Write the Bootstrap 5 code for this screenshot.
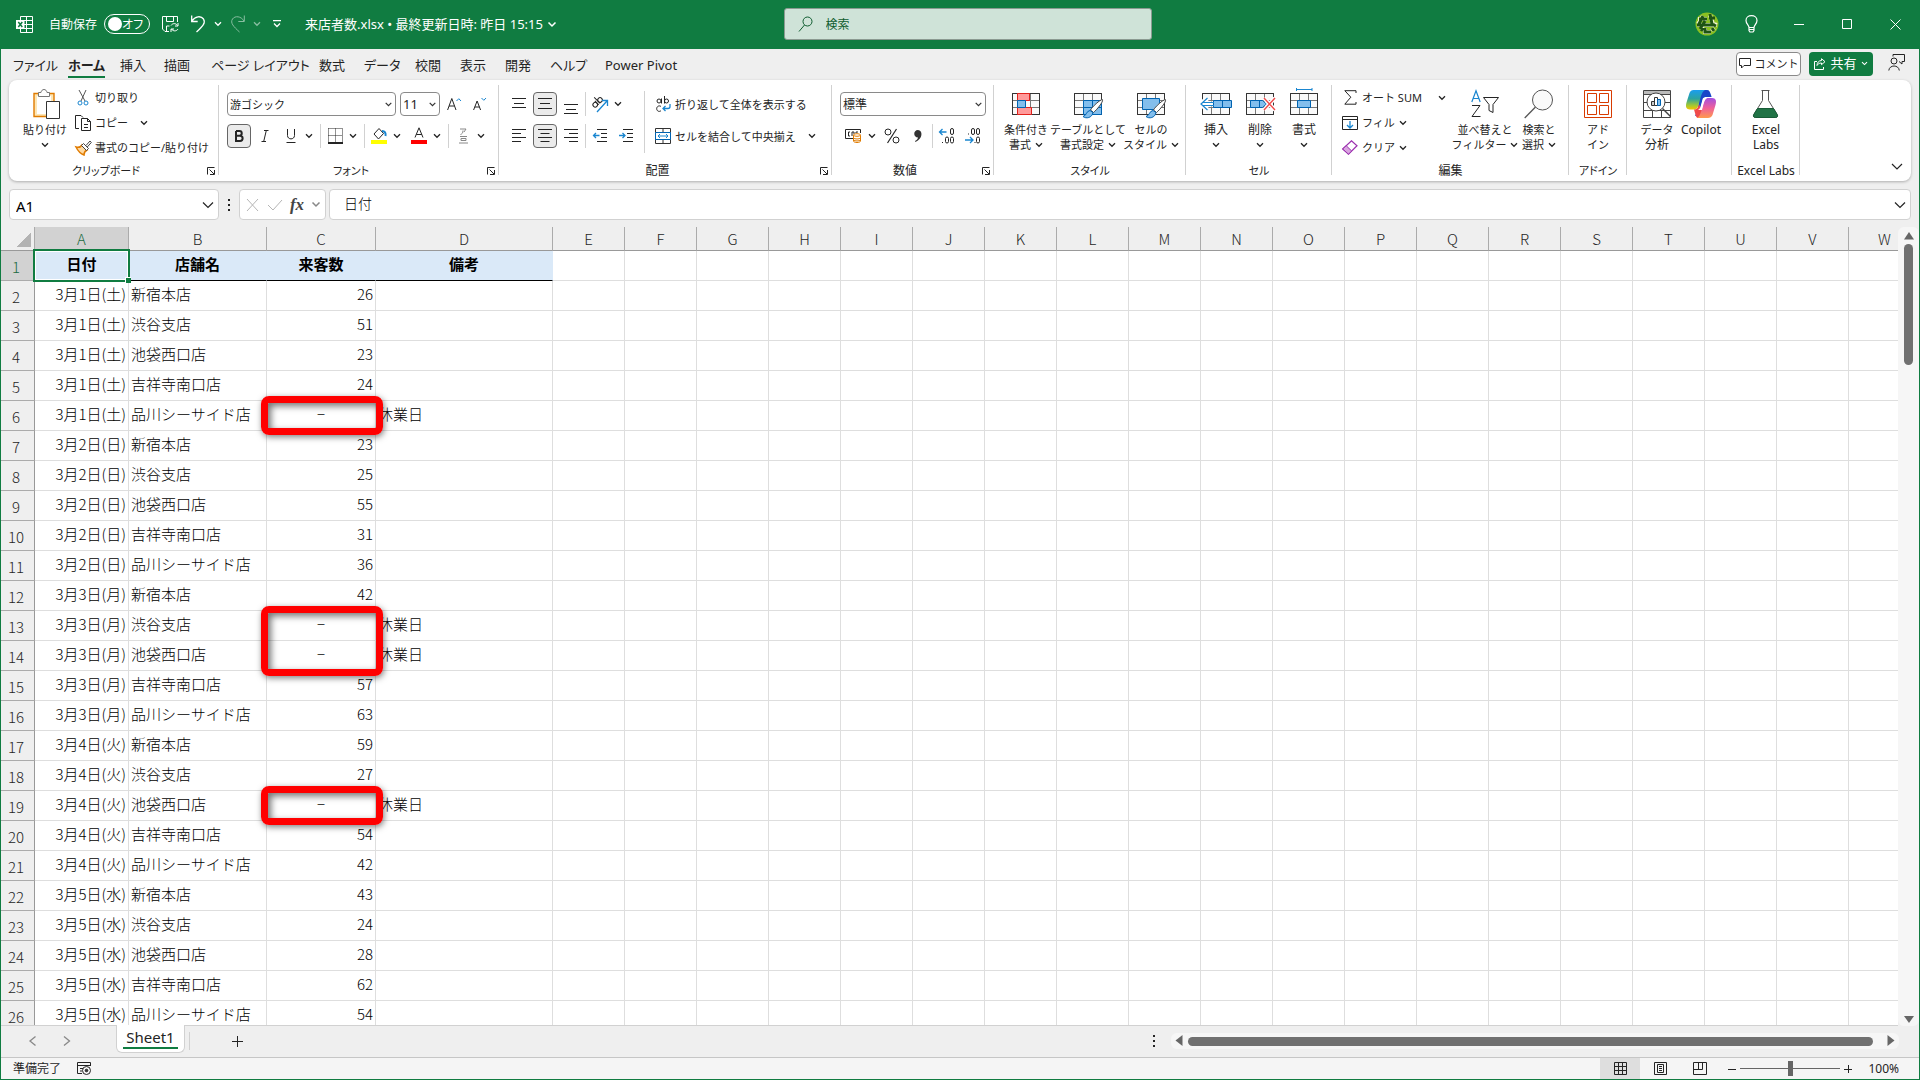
<!DOCTYPE html>
<html lang="ja">
<head>
<meta charset="utf-8">
<meta name="viewport" content="width=device-width, initial-scale=1">
<title>来店者数.xlsx - Excel</title>
<link href="https://cdn.jsdelivr.net/npm/bootstrap@5.3.0/dist/css/bootstrap.min.css" rel="stylesheet">
<style>
:root{--xl:#107c41;--chrome:#efefef;--line:#d1d1d1;--grid:#dedede;--ink:#242424}
body{font-family:"Noto Sans","Noto Sans CJK JP",sans-serif;font-size:12px;line-height:15px;color:var(--ink);font-feature-settings:"palt"}
button{background:none;border:0;padding:0;color:inherit;white-space:nowrap}
svg{display:block;flex:none;fill:none;stroke:currentColor;overflow:visible}
.kana{font-size:11px}
.pale{color:#b5b5b5}
.dim{color:#888}
.app{background:var(--chrome);border:solid var(--xl);border-width:0 1px 1px;overflow:hidden}
.titlebar{height:49px;background:var(--xl);color:#fff}
.docname{font-size:13px}
.pill{width:46px;height:20px;border:1px solid #fff;border-radius:10px;padding:0 8px 0 3px;margin-left:7px;white-space:nowrap}
.knob{width:14px;height:14px;border-radius:50%;background:#fff;flex:none}
.side{flex:1 1 0}
.quick{padding-left:15px}
.gap-l{margin-left:12px}
.finder{width:368px;height:32px;background:#cfe3d8;border:1px solid #8b9a91;border-radius:3px;color:#0e5c2f;padding-left:13px}
.finder input{border:0;background:none;outline:0;color:#0e5c2f;margin-left:11px;width:300px}
.finder input::placeholder{color:#0e5c2f;opacity:1}
.win{width:48px;height:40px}
.tabs{height:32px;font-size:13px;padding:0 14px 0 12px}
.tabgrid{display:grid;grid-template-columns:55px 52px 44px 47px 108px 45px 51px 45px 45px 45px 55px 80px}
.tabgrid a{color:var(--ink);text-decoration:none;line-height:33px;height:29px;white-space:nowrap;justify-self:start}
.tabgrid a.on{font-weight:700;border-bottom:2px solid var(--xl)}
.tool{height:24px;border-radius:4px;font-size:13px;margin-top:3px}
.tool-c{width:65px;background:#fff;border:1px solid #8a8a8a;font-size:11px;margin-right:8px}
.tool-s{width:64px;background:var(--xl);color:#fff;margin-right:15px}
.ribbon{background:#fff;border-radius:8px;margin:0 8px;height:101px;padding-top:5px;box-shadow:0 1px 3px rgba(0,0,0,.28)}
.grp{background:linear-gradient(var(--line),var(--line)) right top/1px 90px no-repeat}
.grp-body{height:76px}
.cap{height:20px;line-height:20px}
.cap button{width:16px}
.cap button svg{margin:0 auto}
.g1{width:210px}.g2{width:280px}.g3{width:333px}.g4{width:162px}.g5{width:192px}.g6{width:146px}.g7{width:237px}.g8{width:58px}.g9{width:105px}.g10{width:68px}
.big{display:flex;flex-direction:column;align-items:center;height:76px}
.big .pic{height:37px;display:flex;align-items:center}
.big .ln{height:15px;display:flex;align-items:center;gap:4px}
.w44{width:44px}.w56{width:56px}.w64{width:64px}.w60{width:60px}.w66{width:66px}.w52{width:52px}
.sm{display:flex;align-items:center;height:25px}
.sm .pic{width:20px;margin-right:2px;display:flex;justify-content:center}
.tworow{padding-top:7px;display:flex;flex-direction:column;gap:8px}
.tworow .sm{height:24px}
.ib{width:24px;height:24px;display:flex;align-items:center;justify-content:center}
.ib.on{border:1px solid #666;border-radius:4px;background:#ebebeb}
.near{margin-left:2px}
.cv{width:12px;height:24px;display:flex;align-items:center;justify-content:center}
.sep{width:1px;height:24px;background:var(--line);margin:0 2px 0 5px}
.sep.even{margin:0 2px}
.sep.tall{height:62px;margin:6px 0 0 6px}
.pick{appearance:none;height:24px;border:1px solid #8a8a8a;border-radius:4px;padding:0 2px;color:var(--ink);background:#fff url("data:image/svg+xml,%3Csvg xmlns='http://www.w3.org/2000/svg' width='7' height='5'%3E%3Cpath d='M.7.8 3.5 3.6 6.3.8' fill='none' stroke='%23333' stroke-width='1.2'/%3E%3C/svg%3E") right 3px center no-repeat}
.pick.f{width:169px}.pick.s{width:40px;font-size:13px}.pick.n{width:146px;margin-left:8px}
.money{padding-left:10px}
.fbar{margin:8px 8px 7px;height:31px}
.fbox{background:#fff;border:1px solid var(--line);border-radius:4px;height:31px}
.fbox input{border:0;outline:0;background:none;min-width:0}
.namebox{width:210px;padding:0 4px}
.namebox input{font-size:15px;padding-top:3px}
.fxbox{width:87px;margin-right:3px}
.fxl{font:italic 700 17px "Liberation Serif",serif;color:#444}
.fx-in{font-size:14px;font-family:"Noto Sans CJK JP",sans-serif;font-weight:300;padding:0 0 2px 14px;font-feature-settings:normal}
.gridwrap{min-height:0}
.sheet{background:#fff;overflow:hidden;border-bottom:1px solid var(--line)}
.cells{border-collapse:separate;border-spacing:0;table-layout:fixed;width:1919px;font-family:"Noto Sans CJK JP",sans-serif;font-size:15px;line-height:22px;font-weight:300;color:#000;font-feature-settings:normal}
.cells th,.cells td{padding:0 2px;white-space:nowrap;height:30px;border:solid var(--grid);border-width:0 1px 1px 0}
.cells td{padding-bottom:4px}
.cells th{background:var(--chrome);font-weight:300;text-align:center;color:#262626}
.cells thead th{height:24px;border-color:#ababab;border-bottom-color:#999}
.cells tbody th{border-color:#999;border-bottom-color:#ababab;padding:2px 3px 0 0}
.cells th.sel{background:#d2d2d2;color:#1b6b41}
.cells td.hd{background:#dae9f8;font-weight:700;text-align:center;border-color:#dae9f8;border-bottom-color:#000}
.cells .r{text-align:right}
.cells .c{text-align:center;position:relative}
.corner{padding:0!important;background:linear-gradient(135deg,transparent 50%,#b3b3b3 50%) right 3px bottom 3px/15px 15px no-repeat var(--chrome)!important}
.cells .cur{position:relative}
.cur::before{content:"";position:absolute;inset:-2px -2px -2px -2px;border:2px solid #107c41;box-shadow:inset 0 0 0 1px #fff;z-index:2}
.cur::after{content:"";position:absolute;right:-3px;bottom:-3px;width:6px;height:6px;background:#107c41;border:solid #fff;border-width:1px 0 0 1px;z-index:3}
.flag{position:absolute;inset:-5px -8px -5px -6px;border:7px solid #f00;border-radius:8px;z-index:4;box-shadow:1px 2px 6px rgba(0,0,0,.5),inset 3px 3px 7px rgba(0,0,0,.55)}
.flag.two{bottom:-36px}
.vbar{width:21px}
.vthumb{width:9px;height:121px;border-radius:5px;background:#707070;margin-top:1px}
.hbar{height:16px;background:#f6f6f6;border-radius:6px;width:728px;margin-right:20px}
.hthumb{height:9px;border-radius:5px;background:#707070;margin:0 14px 0 5px}
.track{background:#f6f6f6;border-radius:6px}
.bottom{height:32px;border-bottom:1px solid #c6c6c6;padding-bottom:1px}
.pager{width:115px;padding-left:25px;gap:16px}
.sheet-tab{width:69px;height:28px;margin-top:-1px;background:#fff;border:1px solid var(--line);border-top:0;border-radius:0 0 6px 6px;font-size:15px}
.sheet-tab span{border-bottom:2px solid var(--xl);padding:0 3px;height:24px;line-height:25px}
.tab-end{width:1px;height:18px;background:var(--line);margin:0 42px 0 4px}
.status{height:21px;background:#f5f5f5}
.view{width:40px;height:21px;display:flex;align-items:center;justify-content:center}
.view.on{background:#dedede}
.zoomer{appearance:none;width:100px;height:16px;background:linear-gradient(#666,#666) center/100% 1px no-repeat;margin:0}
.zoomer::-webkit-slider-thumb{appearance:none;width:5px;height:15px;background:#666}
</style>
<script src="https://cdn.jsdelivr.net/npm/bootstrap@5.3.0/dist/js/bootstrap.bundle.min.js"></script>
</head>
<body>
<svg class="d-none" xmlns="http://www.w3.org/2000/svg">
<symbol id="cv" viewBox="0 0 8 6"><path d="M1 1.3 4 4.3 7 1.3" stroke-width="1.3"/></symbol>
<symbol id="lch" viewBox="0 0 8 8"><path d="M.5 7.500V.5h7M2.500 2.500l4.500 4.500M7.500 3v4.500H3"/></symbol>
<symbol id="tbl" viewBox="0 0 28 22"><path d="M.5.5h27v21H.5z" fill="#fafafa"/><path d="M.5 7.500h27M.5 14.500h27M9.500.5v21M18.500.5v21" stroke="#777"/><path d="M.5.5h27v21H.5z" stroke="#333"/></symbol>
<symbol id="brush" viewBox="0 0 22 20"><path d="M20.500.6C18 .5 10 8 8.500 11l3 2.500C14.500 11 21.500 3 20.500.6z" fill="#fff" stroke="#444"/><path d="M8 11.500c-4 .5-3 5-7 6 3 2.500 9 1.500 10-4z" fill="#83beec" stroke="#0063b1"/></symbol>
</svg>
<div class="app d-flex flex-column vh-100">

<header class="titlebar d-flex align-items-center">
 <div class="side quick d-flex align-items-center">
  <svg width="17" height="17" viewBox="0 0 17 17"><path d="M4.500 4V.5h12v16h-12V13M10.500.5v16M4.500 4.500h12M8 8.500h8.500M4.500 12.500h12"/><path d="M0 4h8.500v9H0z" fill="#fff" stroke="none"/><path d="m2.300 6 4 5M6.300 6l-4 5" stroke="#107c41" stroke-width="1.500"/></svg>
  <label class="d-flex align-items-center ms-3">自動保存<input type="checkbox" class="visually-hidden"><span class="pill d-flex align-items-center justify-content-between"><span class="knob"></span>オフ</span></label>
  <button class="gap-l" aria-label="保存"><svg width="17" height="17" viewBox="0 0 17 17"><path d="M7 15.500H3L.5 13V.5h15V6M4.500.5v5h7v-5M4.500 15v-5h3M9 9.500c1.500-2.500 5-2.500 6.500 0M16 7v3h-3M16 13c-1.500 2.500-5 2.500-6.500 0M9 16v-3h3"/></svg></button>
  <button class="gap-l d-flex align-items-center gap-2" aria-label="元に戻す"><svg width="15" height="18" viewBox="0 0 15 18"><path d="M.7.5v6h6M1 6C4 1 10 .5 12.500 4c2.500 4-1 7.500-7 13" stroke-width="1.300"/></svg><svg width="8" height="6"><use href="#cv"/></svg></button>
  <button class="ms-2 d-flex align-items-center gap-2 opacity-50" aria-label="やり直し"><svg width="15" height="18" viewBox="0 0 15 18"><path d="M14.300.5v6h-6M14 6C11 1 5 .5 2.500 4c-2.500 4 1 7.500 7 13"/></svg><svg width="8" height="6"><use href="#cv"/></svg></button>
  <button class="gap-l" aria-label="カスタマイズ"><svg width="8" height="8" viewBox="0 0 8 8"><path d="M0 .7h8M1 3.500 4 6.500 7 3.500" stroke-width="1.300"/></svg></button>
  <button class="docname ms-4 d-flex align-items-center gap-1">来店者数.xlsx • 最終更新日時: 昨日 15:15 <svg width="10" height="7" viewBox="0 0 8 6"><use href="#cv"/></svg></button>
 </div>
 <label class="finder d-flex align-items-center"><svg width="15" height="17" viewBox="0 0 15 17"><circle cx="9.500" cy="5.500" r="4.500"/><path d="M6.500 9 1 15.500"/></svg><input type="search" placeholder="検索" aria-label="検索"></label>
 <div class="side d-flex align-items-center justify-content-end">
  <button class="me-2" aria-label="アカウント"><svg width="24" height="24" viewBox="0 0 24 24"><circle cx="12" cy="12" r="11.500" fill="#8bc021" stroke="none"/><g stroke="#eef3cf" stroke-width="4"><path d="M3 7h9M2 13h17M8 4l-5 8M10 11l-4 6M15 3l3 9 4 1M6 18l2-2M10 16v4h6M17 16l2 3"/></g><g stroke="#1e5414" stroke-width="3"><path d="M4 7h8M2 13h18M8 4 4 12M10 9l-5 8M15 2l2 10 4 2M14 6h6M6 19l2-3M10 16v4h6M17 16l2 3"/></g></svg></button>
  <button class="win d-flex align-items-center justify-content-center" aria-label="ヒント"><svg width="13" height="18" viewBox="0 0 13 18"><path d="M4 12.500C4 10 1 9 1 5.500 1 2.500 3.500.7 6.500.7S12 2.500 12 5.500C12 9 9 10 9 12.500zM4 12.500v3l1 1.500h3l1-1.500v-3M4 14.500h5" stroke-width="1.200"/></svg></button>
  <button class="win d-flex align-items-center justify-content-center" aria-label="最小化"><svg width="10" height="10"><path d="M0 5.500h10"/></svg></button>
  <button class="win d-flex align-items-center justify-content-center" aria-label="最大化"><svg width="10" height="10"><path d="M.5.5h9v9h-9z"/></svg></button>
  <button class="win d-flex align-items-center justify-content-center" aria-label="閉じる"><svg width="11" height="11"><path d="m.5.5 10 10M10.500.5l-10 10"/></svg></button>
 </div>
</header>

<nav class="tabs d-flex justify-content-between align-items-start">
 <div class="tabgrid"><a href="#">ファイル</a><a href="#" class="on">ホーム</a><a href="#">挿入</a><a href="#">描画</a><a href="#">ページ レイアウト</a><a href="#">数式</a><a href="#">データ</a><a href="#">校閲</a><a href="#">表示</a><a href="#">開発</a><a href="#">ヘルプ</a><a href="#">Power Pivot</a></div>
 <div class="d-flex align-items-center">
  <button class="tool tool-c d-flex align-items-center justify-content-center gap-1"><svg width="12" height="11" viewBox="0 0 12 11"><path d="M.5.5h11v7H5L2.500 10V7.500h-2z"/></svg>コメント</button>
  <button class="tool tool-s d-flex align-items-center justify-content-center gap-1"><svg width="12" height="12" viewBox="0 0 12 12"><path d="M3 3.500H.5v8h9V9M7.500.7l3.500 3-3.500 3V5C5 5 4 6 3 7.500c0-3 2-5 4.500-5z"/></svg>共有<svg width="7" height="5"><use href="#cv"/></svg></button>
  <button aria-label="共同作業"><svg width="17" height="17" viewBox="0 0 17 17"><circle cx="6" cy="7" r="3"/><path d="M.8 16.500c.5-6 10-6 10.500 0M5 2.500v-2h11.500v7H14v2.500l-3-2.500"/></svg></button>
 </div>
</nav>

<section class="ribbon d-flex">
 <div class="grp g1 kana"><div class="grp-body d-flex ps-2">
  <button class="big w56"><span class="pic"><svg width="32" height="30" viewBox="-4 0 32 30"><path d="M1 4.500h20v23H1z" fill="#fde6b5" stroke="#e07b00" stroke-width="1.400"/><path d="M4 7h14v18H4z" fill="#fff" stroke="none"/><path d="M5.500 7.500v-4H8c.5-4 5.500-4 6 0h2.500v4z" fill="#fff" stroke="#777"/><path d="M13.500 12.500h13v17h-13z" fill="#fff" stroke="#333"/></svg></span><span class="ln">貼り付け</span><span class="ln"><svg width="8" height="6"><use href="#cv"/></svg></span></button>
  <div><button class="sm"><span class="pic"><svg width="12" height="16" viewBox="0 0 12 16"><path d="M2 0l6 11M9 0 4 11" stroke="#555"/><circle cx="3" cy="13" r="2" stroke="#1a86d0"/><circle cx="9" cy="13" r="2" stroke="#1a86d0"/></svg></span>切り取り</button>
  <button class="sm"><span class="pic"><svg width="16" height="16" viewBox="0 0 16 16"><path d="M4 13.500H.5V.5H6l2 2M6.500 3.500h6l3 3v9h-9zM12.500 3.500v3h3M9 9.500h4M9 12.500h4"/></svg></span>コピー<span class="gap-l"><svg width="8" height="6"><use href="#cv"/></svg></span></button>
  <button class="sm"><span class="pic"><svg width="17" height="16" viewBox="0 0 17 16"><path d="M1 7c3 1 5-.5 6-2l5 5c-2 1-3 3-3 5-3-1-6-4-8-8z" fill="#ffd9a0" stroke="#e07b00" stroke-width="1.500"/><path d="m6.500 5.500 2-2 5 5-2 2zM11 5.500 15 1l1.300 1.500-4 4.500" fill="#fff" stroke="#444"/></svg></span>書式のコピー/貼り付け</button></div>
 </div><div class="cap d-flex"><span class="flex-fill text-center">クリップボード</span><button aria-label="詳細"><svg width="8" height="8"><use href="#lch"/></svg></button></div></div>

 <div class="grp g2"><div class="grp-body tworow ps-2">
  <div class="d-flex"><select class="pick f kana" aria-label="フォント"><option>游ゴシック</option></select><select class="pick s ms-1" aria-label="サイズ"><option>11</option></select>
   <button class="ib near" aria-label="拡大"><svg width="15" height="14" viewBox="0 0 15 14"><path d="M.6 13 4.800 1.500 9 13M2 9h5.500"/><path d="m9.500 4 2.300-2.300L14 4" stroke="#1a86d0"/></svg></button><button class="ib near" aria-label="縮小"><svg width="14" height="14" viewBox="0 0 14 14"><path d="m.6 13 3.500-9 3.500 9M1.800 10h4.700"/><path d="m8.500 1 2.300 2.300L13 1" stroke="#1a86d0"/></svg></button></div>
  <div class="d-flex"><button class="ib on" aria-label="太字"><svg width="10" height="12" viewBox="0 0 10 12"><path d="M2 1h3.500c3 0 3 4.700 0 4.700H2M2 5.700h4c3.500 0 3.500 5.300 0 5.300H2zV1" stroke-width="2"/></svg></button><button class="ib near" aria-label="斜体"><svg width="8" height="12"><path d="M3 .5h4.500M.5 11.500H5M5.300.5 2.700 11.500"/></svg></button><button class="ib near" aria-label="下線"><svg width="10" height="14"><path d="M1.500 0v6.500c0 4.500 7 4.500 7 0V0M.5 13.500h9"/></svg></button><button class="cv" aria-label="下線の種類"><svg width="8" height="6"><use href="#cv"/></svg></button><span class="sep"></span>
   <button class="ib" aria-label="罫線"><svg width="15" height="16"><path d="M.5.5h14M.5 7.500h14M.5.5v14M7.500.5v14M14.500.5v14" stroke-dasharray="1 1"/><path d="M0 15h15" stroke-width="2"/></svg></button><button class="cv" aria-label="罫線の種類"><svg width="8" height="6"><use href="#cv"/></svg></button><span class="sep"></span>
   <button class="ib" aria-label="塗りつぶし"><svg width="17" height="18"><path d="m3 7 5-5.500 4.500 5L7.500 12z"/><path d="M11 4c3 0 4 2 3.500 5" stroke="#1a86d0" stroke-width="2"/><path d="M0 13h16v4H0z" fill="#ff0" stroke="none"/></svg></button><button class="cv" aria-label="色"><svg width="8" height="6"><use href="#cv"/></svg></button>
   <button class="ib ms-1" aria-label="文字色"><svg width="16" height="18"><path d="M4 10.500 8 .8l4 9.700M5.300 7.500h5.500"/><path d="M0 13h16v4H0z" fill="red" stroke="none"/></svg></button><button class="cv" aria-label="文字の色"><svg width="8" height="6"><use href="#cv"/></svg></button><span class="sep"></span>
   <button class="ib dim" aria-label="ふりがな"><svg width="9" height="16"><path d="M1 1h6L5 4M4 2.500C4 5 3 6 1.500 6.500M1 8.500h7M2 10.500h5v2H2zM0 15h9"/></svg></button><button class="cv" aria-label="ふりがな設定"><svg width="8" height="6"><use href="#cv"/></svg></button></div>
 </div><div class="cap d-flex kana"><span class="flex-fill text-center">フォント</span><button aria-label="詳細"><svg width="8" height="8"><use href="#lch"/></svg></button></div></div>

 <div class="grp g3"><div class="grp-body d-flex ps-2">
  <div class="tworow">
   <div class="d-flex"><button class="ib" aria-label="上揃え"><svg width="14" height="20"><path d="M0 4.500h14M2 9.500h10M0 13.500h14"/></svg></button><button class="ib on near" aria-label="上下中央"><svg width="14" height="12"><path d="M0 .5h14M2 5.500h10M0 10.500h14"/></svg></button><button class="ib near" aria-label="下揃え"><svg width="14" height="20"><path d="M0 10.500h14M2 15.500h10M0 19.500h14"/></svg></button><span class="sep even"></span><button class="ib" aria-label="方向"><svg width="18" height="18"><g transform="rotate(-45 6 8)"><circle cx="3.500" cy="8" r="2.300"/><path d="M6 5v5.500M8 2v8.500"/><circle cx="10.300" cy="8" r="2.300"/></g><path d="M6 17 16 6M11 5.500h5.500V11" stroke="#1a86d0" stroke-width="1.300"/></svg></button><button class="cv" aria-label="方向の種類"><svg width="8" height="6"><use href="#cv"/></svg></button></div>
   <div class="d-flex"><button class="ib" aria-label="左揃え"><svg width="14" height="14"><path d="M0 .5h14M0 4.500h9M0 8.500h14M0 12.500h9"/></svg></button><button class="ib on near" aria-label="中央揃え"><svg width="14" height="14"><path d="M0 .5h14M2.500 4.500h9M0 8.500h14M2.500 12.500h9"/></svg></button><button class="ib near" aria-label="右揃え"><svg width="14" height="14"><path d="M0 .5h14M5 4.500h9M0 8.500h14M5 12.500h9"/></svg></button><span class="sep even"></span><button class="ib" aria-label="インデントを減らす"><svg width="14" height="14"><path d="M4 .5h10M8 4.500h6M8 8.500h6M4 12.500h10"/><path d="M.5 6.500h6M3 4 .5 6.500 3 9" stroke="#1a86d0" stroke-width="1.300"/></svg></button><button class="ib near" aria-label="インデントを増やす"><svg width="14" height="14"><path d="M4 .5h10M8 4.500h6M8 8.500h6M4 12.500h10"/><path d="M0 6.500h6M3.500 4 6 6.500 3.500 9" stroke="#1a86d0" stroke-width="1.300"/></svg></button></div>
  </div>
  <span class="sep tall"></span>
  <div class="tworow ps-2 kana"><button class="sm"><span class="pic"><svg width="15" height="16"><circle cx="3" cy="5" r="2"/><path d="M5.500 2.500v5M8.500 0v7.500M5 10.500c-2-1.500-4.300 0-4.300 2.200s2.300 3.600 4.300 2"/><circle cx="10.500" cy="5" r="2"/><path d="M14 8v2.500c0 1.500-1 2-2 2H7M9.500 10 7 12.500 9.500 15" stroke="#1a86d0" stroke-width="1.300"/></svg></span>折り返して全体を表示する</button>
  <button class="sm"><span class="pic"><svg width="16" height="16"><path d="M.5.5h15v15H.5zM8 .5v15" stroke="#333"/><path d="M.5 4.500h15v7H.5z" fill="#fff" stroke="#0063b1"/><path d="M3 8h10M5 6 3 8l2 2M11 6l2 2-2 2" stroke="#1a86d0"/></svg></span>セルを結合して中央揃え<span class="gap-l"><svg width="8" height="6"><use href="#cv"/></svg></span></button></div>
 </div><div class="cap d-flex"><span class="flex-fill text-center">配置</span><button aria-label="詳細"><svg width="8" height="8"><use href="#lch"/></svg></button></div></div>

 <div class="grp g4"><div class="grp-body tworow">
  <div class="d-flex"><select class="pick n" aria-label="表示形式"><option>標準</option></select></div>
  <div class="d-flex money"><button class="ib" aria-label="通貨"><svg width="18" height="14"><path d="M9 9.500H.5V.5h15V4M5 3H3.500v4H5M7 7V3h2v2M11 4V3h2"/><path d="M8.500 6v6c0 2 7 2 7 0V6" fill="#fff" stroke="#e07b00"/><ellipse cx="12" cy="6" rx="3.500" ry="1.300" fill="#fff" stroke="#e07b00"/><path d="M8.500 9c1 1.300 6 1.300 7 0M8.500 11c1 1.300 6 1.300 7 0" stroke="#e07b00"/></svg></button><button class="cv" aria-label="通貨の種類"><svg width="8" height="6"><use href="#cv"/></svg></button><button class="ib near" aria-label="パーセント"><svg width="16" height="16"><circle cx="4" cy="4" r="3"/><circle cx="12" cy="12" r="3"/><path d="M12.500 1 3.500 15" stroke-width="1.200"/></svg></button><button class="ib near" aria-label="桁区切り"><svg width="8" height="12"><path d="M4 0c5 0 5 9-2.500 12l-.5-1c2-1 3-2.500 3-3.500C-1 7.500-1 0 4 0z" fill="#333" stroke="none"/></svg></button><span class="sep even"></span>
   <button class="ib" aria-label="小数点以下を増やす"><svg width="16" height="16"><path d="M.5 4h7M3.500 1 .5 4l3 3" stroke="#1a86d0" stroke-width="1.300"/><path d="M3.500 14v1"/><rect x="11.500" y=".5" width="3" height="6" rx="1.500"/><rect x="6.500" y="9" width="3" height="6" rx="1.500"/><rect x="11.500" y="9" width="3" height="6" rx="1.500"/></svg></button><button class="ib near" aria-label="小数点以下を減らす"><svg width="16" height="16"><path d="M0 12h8M5 9l3 3-3 3" stroke="#1a86d0" stroke-width="1.300"/><path d="M3.500 5.500v1M10 14v1"/><rect x="11.500" y=".5" width="3" height="6" rx="1.500"/><rect x="6.500" y=".5" width="3" height="6" rx="1.500"/><rect x="11.500" y="9" width="3" height="6" rx="1.500"/></svg></button></div>
 </div><div class="cap d-flex"><span class="flex-fill text-center">数値</span><button aria-label="詳細"><svg width="8" height="8"><use href="#lch"/></svg></button></div></div>

 <div class="grp g5 kana"><div class="grp-body d-flex">
  <button class="big w64"><span class="pic"><svg width="28" height="22"><use href="#tbl"/><path d="M5.500.5h12v7h-12zM5.500 14.500h14v7h-14z" fill="#ff9a9a" stroke="#e3211c"/><path d="M5.500 7.500h8v7h-8z" fill="#83beec" stroke="#0063b1"/></svg></span><span class="ln">条件付き</span><span class="ln">書式 <svg width="8" height="6"><use href="#cv"/></svg></span></button>
  <button class="big w60"><span class="pic"><svg width="28" height="28"><svg y="3" width="28" height="22"><use href="#tbl"/></svg><path d="M9.500 10.500h18v14h-18z" fill="#83beec" stroke="#0063b1"/><path d="M18.500 10.500v14M9.500 17.500h18" stroke="#0063b1"/><svg x="8" y="9" width="22" height="20"><use href="#brush"/></svg></svg></span><span class="ln">テーブルとして</span><span class="ln">書式設定 <svg width="8" height="6"><use href="#cv"/></svg></span></button>
  <button class="big w66"><span class="pic"><svg width="28" height="28"><svg y="3" width="28" height="22"><use href="#tbl"/></svg><path d="M5.500 8.500h17v11h-17z" fill="#83beec" stroke="#0063b1"/><svg x="8" y="9" width="22" height="20"><use href="#brush"/></svg></svg></span><span class="ln">セルの</span><span class="ln">スタイル <svg width="8" height="6"><use href="#cv"/></svg></span></button>
 </div><div class="cap text-center">スタイル</div></div>

 <div class="grp g6"><div class="grp-body d-flex ps-2">
  <button class="big w44"><span class="pic"><svg width="32" height="22"><svg x="2" width="28" height="22"><use href="#tbl"/></svg><path d="M13.500 7.500h18v7h-18zM22.500 7.500v7" fill="#83beec" stroke="#0063b1"/><path d="M7 5.500 1 11l6 5.500M1.500 11H13" stroke="#fff" stroke-width="5"/><path d="M7.500 5 1 11l6.500 6M3 9.500h11M3 12.500h11" stroke="#1a86d0" stroke-width="1.200"/></svg></span><span class="ln">挿入</span><span class="ln"><svg width="8" height="6"><use href="#cv"/></svg></span></button>
  <button class="big w44"><span class="pic"><svg width="28" height="22"><use href="#tbl" width="28" height="22"/><path d="M4.500 7.500h12l4 3.500-4 3.500h-12zM13.500 7.500v7" fill="#83beec" stroke="#0063b1"/><path d="M18 5l11 12M29 5 18 17" stroke="#fff" stroke-width="4"/><path d="M18 5l11 12M29 5 18 17" stroke="#f04a4a" stroke-width="1.400"/></svg></span><span class="ln">削除</span><span class="ln"><svg width="8" height="6"><use href="#cv"/></svg></span></button>
  <button class="big w44"><span class="pic"><svg width="28" height="32"><svg y="5" width="28" height="22"><use href="#tbl"/></svg><path d="M7.500 12.500h13v7h-13z" fill="#83beec" stroke="#0063b1"/><path d="M6.500 0v3M22 0v3M6.500 1.500H22" stroke="#1a86d0"/></svg></span><span class="ln">書式</span><span class="ln"><svg width="8" height="6"><use href="#cv"/></svg></span></button>
 </div><div class="cap text-center kana">セル</div></div>

 <div class="grp g7"><div class="grp-body d-flex kana">
  <div class="ps-2 flex-fill"><button class="sm"><span class="pic"><svg width="13" height="15"><path d="M12 3V.7H.8l6 6.500-6 7H12V12"/></svg></span>オート SUM<span class="ms-3"><svg width="8" height="6"><use href="#cv"/></svg></span></button>
  <button class="sm"><span class="pic"><svg width="16" height="14"><path d="M.5.5h15v13H.5zM.5 3.500h15"/><path d="M8 5v7M5 9l3 3 3-3" stroke="#1a86d0" stroke-width="1.300"/></svg></span>フィル<span class="ms-1"><svg width="8" height="6"><use href="#cv"/></svg></span></button>
  <button class="sm"><span class="pic"><svg width="16" height="15"><path d="M.7 9 9.500.7l5.500 5-8.500 8.500z" fill="#fff" stroke="#9b2fae" stroke-width="1.200"/><path d="M.7 9l3.500-3.300 5.500 5.300-3.200 3.200z" fill="#d9a5e0" stroke="#9b2fae"/></svg></span>クリア<span class="ms-1"><svg width="8" height="6"><use href="#cv"/></svg></span></button></div>
  <button class="big w56"><span class="pic"><svg width="28" height="28"><path d="M.8 12 5 .8 9.200 12M2 8.500h6" stroke="#1a86d0" stroke-width="1.200"/><path d="M1 15.500h8L1 26.500h8.500M12.500 7.500h15L22 14.500v8l-4-2v-6z" fill="none"/></svg></span><span class="ln">並べ替えと</span><span class="ln">フィルター <svg width="8" height="6"><use href="#cv"/></svg></span></button>
  <button class="big w52 me-1"><span class="pic"><svg width="30" height="30"><circle cx="18.500" cy="11" r="10" fill="#fafafa" stroke="#555"/><path d="M11.500 18 .7 29" stroke="#555" stroke-width="1.300"/></svg></span><span class="ln">検索と</span><span class="ln">選択 <svg width="8" height="6"><use href="#cv"/></svg></span></button>
 </div><div class="cap text-center">編集</div></div>

 <div class="grp g8 kana"><button class="big w-100"><span class="pic"><svg width="28" height="28"><path stroke="#d83b01" d="M.5.5h27v27H.5zM3.500 3.500h9v9h-9zM15.500 3.500h9v9h-9zM3.500 15.500h9v9h-9zM15.500 15.500h9v9h-9z"/></svg></span><span class="ln">アド</span><span class="ln">イン</span></button><div class="cap text-center">アドイン</div></div>

 <div class="grp g9"><div class="grp-body d-flex ps-2">
  <button class="big w44"><span class="pic"><svg width="28" height="28"><path d="M1 1h26v3H1z" fill="#bbb" stroke="none"/><path d="M.5.5h27v27H.5zM.5 4.500h27M.5 12.500h27M.5 20.500h27M9.500 20v8M18.500 20v8" stroke="#444"/><circle cx="13" cy="12" r="9" fill="#fff" stroke="#444"/><path d="m19.500 18.500 8 8" stroke="#444" stroke-width="1.500"/><path d="M8.500 11.500h3v4h-3z" fill="#ccc" stroke="#333"/><path d="M11.500 7.500h3v8h-3z" fill="#fff" stroke="#333"/><path d="M14.500 9.500h3v6h-3z" fill="#83beec" stroke="#0063b1"/></svg></span><span class="ln kana">データ</span><span class="ln">分析</span></button>
  <button class="big w44"><span class="pic"><svg width="30" height="28" viewBox="0 0 30 28"><defs><linearGradient id="ca" x1="0" y1="0" x2="0" y2="1"><stop offset="0" stop-color="#1a9df0"/><stop offset=".45" stop-color="#2ba3a0"/><stop offset=".8" stop-color="#a8c92e"/><stop offset="1" stop-color="#f5c400"/></linearGradient><linearGradient id="cb" x1="0" y1="0" x2="0" y2="1"><stop offset="0" stop-color="#a34fe0"/><stop offset=".5" stop-color="#f0609a"/><stop offset="1" stop-color="#ff9a4d"/></linearGradient></defs><g stroke="none"><path d="M14 0h7c2.500 0 3 2 4 5l.6 2H20c-3 0-3 2-4 6l-2 7c-1 3-2.500 6-5 6l3-8z" fill="#1746c8"/><path d="M7.500 0H19c-2 1-3 3-4 6l-2.500 9c-1 3-2 4.500-4.500 4.500H4c-4 0-4.700-3-3.500-7L3.500 3C4.300 1 5.500 0 7.500 0z" fill="url(#ca)"/><path d="M8 19.500c3 0 4-2 5-5l5 8c-1 3-2.500 5.500-5 5.500-3 0-3-2-4-5z" fill="#f04a4a"/><path d="M22 28H11c2-1 3-3 4-6l2.500-9c1-3 2-5 4.500-5H26c4 0 4.700 3 3.500 7L26.500 25c-.8 2-2.500 3-4.500 3z" fill="url(#cb)"/><path d="M17 8h4c-2 1-2.500 3-3.500 6l-1.500 6h-4c2-1 2.500-3 3-5z" fill="#fff"/></g></svg></span><span class="ln">Copilot</span></button>
 </div></div>

 <div class="grp g10"><button class="big w-100"><span class="pic"><svg width="26" height="28"><path d="M8.500.5h8M9.500.5v10L.8 24.500c-1 2 .2 3 1.700 3h20c1.500 0 2.700-1 1.700-3L15.500 10.500V.5" fill="#fff" stroke="#555"/><path d="M4.500 18.500h16l3.700 6c1 2-.2 3-1.700 3h-20c-1.500 0-2.700-1-1.700-3z" fill="#217346" stroke="#185c37"/></svg></span><span class="ln">Excel</span><span class="ln">Labs</span></button><div class="cap text-center">Excel Labs</div></div>
 <button class="ms-auto me-2 align-self-end pb-2" aria-label="リボンを折りたたむ"><svg width="12" height="12" viewBox="0 0 12 12"><path d="m1 3 5 5 5-5" stroke-width="1.200"/></svg></button>
</section>

<div class="fbar d-flex align-items-center">
 <div class="fbox namebox d-flex align-items-center"><input class="flex-fill" value="A1" aria-label="名前ボックス"><svg width="12" height="8" viewBox="0 0 12 8"><path d="m1 1.500 5 5 5-5" stroke-width="1.200"/></svg></div>
 <svg class="mx-2" width="4" height="12"><path d="M2 0v12" stroke-width="2" stroke-dasharray="2 3"/></svg>
 <div class="fbox fxbox d-flex align-items-center justify-content-between px-1"><button class="pale" aria-label="キャンセル"><svg width="16" height="14"><path d="m3 1 11 12M14 1 3 13"/></svg></button><button class="pale" aria-label="入力"><svg width="16" height="12"><path d="m1 6 5 5L15 1"/></svg></button><button class="fxl" aria-label="関数の挿入">fx</button><span class="dim"><svg width="10" height="7" viewBox="0 0 8 6"><use href="#cv"/></svg></span></div>
 <div class="fbox flex-fill d-flex align-items-center pe-1"><input class="fx-in flex-fill" value="日付" aria-label="数式バー"><svg width="12" height="8" viewBox="0 0 12 8"><path d="m1 1.500 5 5 5-5" stroke-width="1.200"/></svg></div>
</div>

<main class="gridwrap d-flex flex-fill">
 <div class="sheet flex-fill"><table class="cells"><colgroup id="cols"></colgroup><thead><tr id="letters"></tr></thead><tbody id="rows"></tbody></table></div>
 <div class="vbar d-flex flex-column align-items-center track pt-1">
  <svg width="10" height="12"><path d="M0 8.500 5 1l5 7.500z" fill="#666" stroke="none"/></svg><div class="vthumb"></div><svg class="mt-auto" width="10" height="12"><path d="M0 2h10L5 9z" fill="#666" stroke="none"/></svg>
 </div>
</main>

<footer>
 <div class="bottom d-flex align-items-center">
  <div class="pager d-flex align-items-center dim">
   <button aria-label="前のシート"><svg width="16" height="10"><path d="M9.500.5 4 5l5.500 4.500" stroke-width="1.300"/></svg></button>
   <button aria-label="次のシート"><svg width="16" height="10"><path d="M6 .5 11.500 5 6 9.500" stroke-width="1.300"/></svg></button>
  </div>
  <button class="sheet-tab align-self-start d-flex justify-content-center"><span>Sheet1</span></button>
  <span class="tab-end"></span>
  <button aria-label="新しいシート"><svg width="11" height="11"><path d="M5.500 0v11M0 5.500h11"/></svg></button>
  <svg class="ms-auto me-3" width="2" height="12"><path d="M1 0v12" stroke-width="2" stroke-dasharray="2 3"/></svg>
  <div class="hbar d-flex align-items-center px-1"><svg width="8" height="12"><path d="M7.500 0v11L.5 5.500z" fill="#666" stroke="none"/></svg><div class="hthumb flex-fill"></div><svg width="8" height="12"><path d="M.5 0v11l7-5.500z" fill="#666" stroke="none"/></svg></div>
 </div>
 <div class="status d-flex align-items-center ps-2">
  <span class="ps-1">準備完了</span><svg class="ms-3" width="15" height="14"><path d="M5 11.500H.5V.5h13V4M.5 3.500h13M3 6.500h3M3 9h2"/><circle cx="9.500" cy="8.500" r="4"/><circle cx="9.500" cy="8.500" r="1.300" fill="#333"/></svg>
  <div class="ms-auto d-flex align-items-center">
   <button class="view on" aria-label="標準"><svg width="13" height="13"><path d="M.5.5h12v12H.5zM4.500.5v12M8.500.5v12M.5 4.500h12M.5 8.500h12"/></svg></button>
   <button class="view" aria-label="ページ レイアウト"><svg width="13" height="13"><path d="M.5.5h12v12H.5zM3.500 2.500h6v8h-6zM5 4.500h3M5 6.500h3M5 8.500h3"/></svg></button>
   <button class="view" aria-label="改ページ プレビュー"><svg width="14" height="13"><path d="M.5.5h13v12H.5zM5.500.5v7M9.500.5v7h-9"/></svg></button>
   <button class="ms-2 me-1" aria-label="縮小"><svg width="8" height="8"><path d="M0 4.500h8"/></svg></button><input type="range" class="zoomer" value="50" aria-label="ズーム"><button class="ms-1" aria-label="拡大"><svg width="8" height="8"><path d="M0 4.500h8M4.500 0v8"/></svg></button>
   <span class="ms-3 me-3 pe-1">100%</span>
  </div>
 </div>
</footer>
</div>
<script>
const widths = [34, 94, 138, 109, 177, ...Array(19).fill(72)];
document.getElementById('cols').innerHTML = widths.map(w => `<col style="width:${w}px">`).join('');
const letters = [...'ABCDEFGHIJKLMNOPQRSTUVW'];
document.getElementById('letters').innerHTML = '<th class="corner"></th>' +
  letters.map((l, i) => `<th${i ? '' : ' class="sel"'}>${l}</th>`).join('');
const shops = ['新宿本店', '渋谷支店', '池袋西口店', '吉祥寺南口店', '品川シーサイド店'];
const days = ['3月1日(土)', '3月2日(日)', '3月3日(月)', '3月4日(火)', '3月5日(水)'];
const visits = [26,51,23,24,null, 23,25,55,31,36, 42,null,null,57,63, 59,27,null,54,42, 43,24,28,62,54];
const marks = {6: 'flag', 13: 'flag two', 19: 'flag'};
const blank = '<td></td>'.repeat(19);
let html = '<tr><th class="sel">1</th><td class="hd cur">日付</td><td class="hd">店舗名</td><td class="hd">来客数</td><td class="hd">備考</td>' + blank + '</tr>';
visits.forEach((v, i) => {
  const n = i + 2;
  const count = v === null
    ? `<td class="c">−${marks[n] ? `<span class="${marks[n]}"></span>` : ''}</td><td>休業日</td>`
    : `<td class="r">${v}</td><td></td>`;
  html += `<tr><th>${n}</th><td class="r">${days[Math.floor(i / 5)]}</td><td>${shops[i % 5]}</td>${count}${blank}</tr>`;
});
document.getElementById('rows').innerHTML = html;
</script>
</body>
</html>
